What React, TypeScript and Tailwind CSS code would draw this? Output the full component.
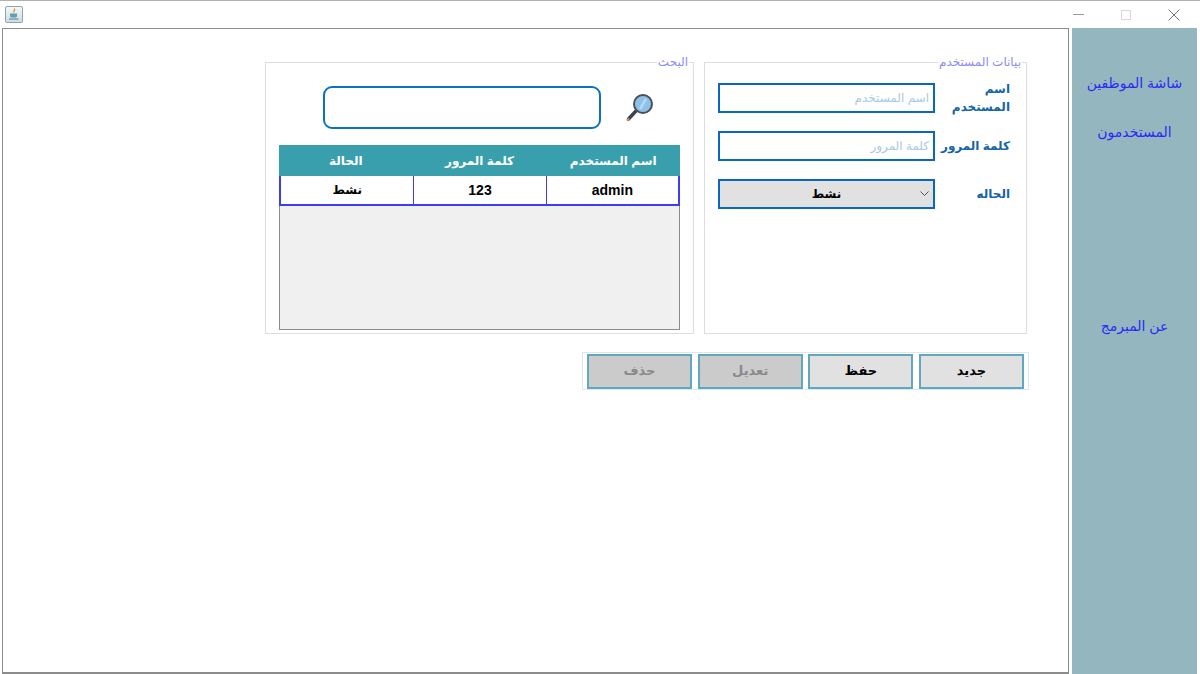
import React from "react";

const font = "font-['Liberation_Sans','DejaVu_Sans',sans-serif]";

// Java cup icon on the window title bar
const AppIcon = () => (
  <div className="w-[18px] h-[17px] rounded-[2px] border border-[#8fa5ad] bg-gradient-to-b from-[#f4f7f8] to-[#cfdde2] flex items-center justify-center">
    <svg width="12" height="13" viewBox="0 0 12 13">
      <path d="M6.5 0.5c1 1.500-1.500 2.200-0.500 4" fill="none" stroke="#e8902e" strokeWidth="1.300" />
      <path d="M2 5.500h7v2.500c0 1-1 1.500-2 1.500h-3c-1 0-2-.5-2-1.500z" fill="#5f9fb0" />
      <path d="M1 10.500h9.500v1H1z" fill="#4d7f90" />
    </svg>
  </div>
);

const SearchGlyph = () => (
  <svg width="30" height="30" viewBox="0 0 30 30">
    <path d="M11 18 L3.500 26" stroke="#3c4450" strokeWidth="3.500" strokeLinecap="round" />
    <path d="M3.500 26 L2.500 27" stroke="#d9924a" strokeWidth="2" strokeLinecap="round" />
    <circle cx="18" cy="11" r="9" fill="#8fc0ea" stroke="#4a5058" strokeWidth="2" />
    <path d="M15 16 L21 6" stroke="#b7d8f3" strokeWidth="2.500" />
  </svg>
);

const FieldRow = ({ label, placeholder }: { label: string; placeholder: string }) => (
  <div className="flex items-center h-[30px]">
    <div className="w-[217px] h-[30px] border-2 border-[#0a66c2] bg-white flex items-center justify-end px-[4px]">
      <span className="text-[12px] text-[#a9c9e6]">{placeholder}</span>
    </div>
    <div className="w-[75px] text-right text-[12px] font-bold text-[#1565a8]">{label}</div>
  </div>
);

const GroupBox = ({ title, className, children }: { title: string; className: string; children: React.ReactNode }) => (
  <div className={`relative h-[272px] border border-[#dedede] ${className}`}>
    <span className="absolute top-[-9px] right-[4px] bg-white px-[1px] text-[12px] leading-[16px] text-[#8c8cf5]">{title}</span>
    {children}
  </div>
);

const ActionButton = ({ label, disabled }: { label: string; disabled?: boolean }) => (
  <div
    className={`w-[105px] h-[35px] border-2 border-[#5fa8bd] flex items-center justify-center text-[13px] font-bold ${
      disabled ? "bg-[#cbcbcb] text-[#8a8a8a]" : "bg-[#e1e1e1] text-black"
    }`}
  >
    {label}
  </div>
);

export default function App() {
  return (
    <div className={`w-[1200px] h-[674px] bg-white flex flex-col overflow-hidden border-t border-[#b0b0b0] ${font}`}>
      {/* Title bar */}
      <div className="h-[27px] shrink-0 flex items-center justify-between pl-[5px] pr-[20px]">
        <AppIcon />
        <div className="flex items-center gap-[37px]">
          <div className="w-[11px] h-px bg-[#9a9a9a]" />
          <div className="w-[10px] h-[10px] border border-[#d8d8d8]" />
          <svg width="12" height="12" viewBox="0 0 12 12">
            <path d="M0.500 0.500L11.500 11.500M11.500 0.500L0.500 11.500" stroke="#777" strokeWidth="1" />
          </svg>
        </div>
      </div>

      <div className="flex-1 flex min-h-0">
        {/* Main form area */}
        <div className="ml-[2px] w-[1067px] border border-[#8c8c8c] border-b-2 bg-white pt-[33px] pl-[262px]">
          <div className="flex gap-[10px]">
            <GroupBox title="البحث" className="w-[429px] pt-[23px] pl-[13px]">
              <div className="flex items-center pl-[44px] gap-[24px] h-[43px]">
                <div className="w-[278px] h-[43px] rounded-[9px] border-2 border-[#0a72c0] bg-white" />
                <SearchGlyph />
              </div>
              {/* Users table */}
              <div className="mt-[16px] w-[401px] h-[185px] border border-[#8c8c8c] bg-[#f0f0f0]" dir="rtl">
                <div className="h-[31px] -m-px mb-0 bg-[#3a9fad] grid grid-cols-3 items-center text-center text-[12px] font-bold text-white">
                  <span>اسم المستخدم</span>
                  <span>كلمة المرور</span>
                  <span>الحالة</span>
                </div>
                <div className="h-[30px] -mx-px bg-white border-x-2 border-b-2 border-[#3d3df5] grid grid-cols-3 items-center text-center text-[14px] font-bold text-black">
                  <span className="h-full flex items-center justify-center border-l border-[#3d3df5]">admin</span>
                  <span className="h-full flex items-center justify-center border-l border-[#3d3df5]">123</span>
                  <span className="text-[12px]">نشط</span>
                </div>
              </div>
            </GroupBox>

            <GroupBox title="بيانات المستخدم" className="w-[323px] pt-[20px] pl-[13px]">
              <div className="flex flex-col gap-[18px]">
                <FieldRow label="اسم المستخدم" placeholder="اسم المستخدم" />
                <FieldRow label="كلمة المرور" placeholder="كلمة المرور" />
                <div className="flex items-center h-[30px]">
                  <div className="relative w-[217px] h-[30px] border-2 border-[#0a66c2] bg-[#e1e1e1] flex items-center justify-center text-[12px] font-bold text-black">
                    نشط
                    <svg className="absolute right-[4px] top-[9px]" width="9" height="7" viewBox="0 0 9 7">
                      <path d="M0.500 1.500L4.500 5.500L8.500 1.500" fill="none" stroke="#555" strokeWidth="1" />
                    </svg>
                  </div>
                  <div className="w-[75px] text-right text-[12px] font-bold text-[#1565a8]">الحاله</div>
                </div>
              </div>
            </GroupBox>
          </div>

          {/* Action buttons */}
          <div className="mt-[18px] ml-[317px] w-[447px] h-[38px] border border-[#dbe6fa] flex items-center justify-between pl-[4px] pr-[4px]">
            <ActionButton label="حذف" disabled />
            <ActionButton label="تعديل" disabled />
            <ActionButton label="حفظ" />
            <ActionButton label="جديد" />
          </div>
        </div>

        {/* Side navigation */}
        <div className="ml-[3px] w-[125px] bg-[#94b6bf] flex flex-col items-center text-[14px] text-[#2a2af5]">
          <span className="mt-[45px] leading-[20px]">شاشة الموظفين</span>
          <span className="mt-[29px] leading-[20px]">المستخدمون</span>
          <span className="mt-[174px] leading-[20px]">عن المبرمج</span>
        </div>
      </div>
    </div>
  );
}
